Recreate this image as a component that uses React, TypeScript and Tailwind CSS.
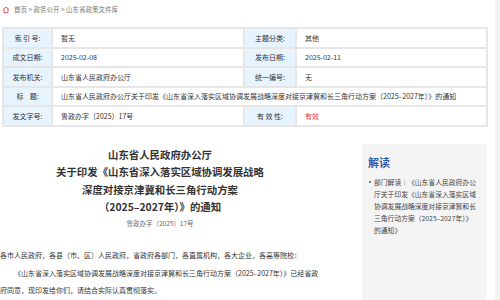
import React from 'react';

const font = { fontFamily: '"Noto Sans CJK SC", "Noto Sans", sans-serif' };

const Label = ({ children }: { children: React.ReactNode }) => (
  <div className="bg-[#e8f4fd] flex items-center justify-center text-[7px] text-[#333] whitespace-pre">{children}</div>
);

const Value = ({ children, red }: { children: React.ReactNode; red?: boolean }) => (
  <div className={`bg-white flex items-center pl-[8px] text-[7px] ${red ? 'text-[#e4393c]' : 'text-[#333]'}`}>{children}</div>
);

const readingLines = [
  '部门解读｜《山东省人民政府办公',
  '厅关于印发《山东省深入落实区域',
  '协调发展战略深度对接京津冀和长',
  '三角行动方案（2025–2027年）》',
  '的通知》',
];

const App = () => {
  return (
    <div className="w-[500px] h-[300px] overflow-hidden bg-white relative" style={font}>
      {/* right edge strip */}
      <div className="absolute right-0 top-0 w-[5px] h-full bg-[#f2f2f2]" />

      {/* breadcrumb */}
      <div className="flex items-center gap-[4px] pl-[2px] pt-[4px] h-[16px] text-[6.5px] text-[#777]">
        <svg width="8" height="8" viewBox="0 0 24 24" fill="none" stroke="#e4393c" strokeWidth="2.5" strokeLinejoin="round">
          <path d="M3 11 L12 3 L21 11" />
          <path d="M6 9 V20 H18 V9" />
        </svg>
        <span>首页 &gt; 政务公开 &gt; 山东省政策文件库</span>
      </div>

      {/* info table */}
      <div className="ml-[2px] mt-[11px] w-[486px] grid grid-cols-[47px_190px_50px_1fr] auto-rows-[17.5px] gap-[2px] p-[2px] bg-[#e6e6e6]">
        <Label>索 引 号:</Label>
        <Value>暂无</Value>
        <Label>主题分类:</Label>
        <Value>其他</Value>

        <Label>成文日期:</Label>
        <Value>2025-02-08</Value>
        <Label>发布日期:</Label>
        <Value>2025-02-11</Value>

        <Label>发布机关:</Label>
        <Value>山东省人民政府办公厅</Value>
        <Label>统一编号:</Label>
        <Value>无</Value>

        <Label>标    题:</Label>
        <div className="col-span-3 bg-white flex items-center pl-[8px] text-[7px] text-[#333]">
          山东省人民政府办公厅关于印发《山东省深入落实区域协调发展战略深度对接京津冀和长三角行动方案（2025–2027年）》的通知
        </div>

        <Label>发文字号:</Label>
        <Value>鲁政办字〔2025〕17号</Value>
        <Label>有 效 性:</Label>
        <Value red>有效</Value>
      </div>

      {/* content */}
      <div className="flex mt-[19px]">
        <div className="w-[320px] shrink-0">
          <div className="text-center font-bold text-[10.4px] leading-[17.5px] text-[#333]">
            <div>山东省人民政府办公厅</div>
            <div>关于印发《山东省深入落实区域协调发展战略</div>
            <div>深度对接京津冀和长三角行动方案</div>
            <div>（2025–2027年）》的通知</div>
          </div>
          <div className="text-center text-[6.5px] text-[#666] mt-[3px]">鲁政办字〔2025〕17号</div>
          <div className="mt-[19px] text-[7px] leading-[17.5px] text-[#333]">
            <p>各市人民政府，各县（市、区）人民政府，省政府各部门，各直属机构，各大企业，各高等院校：</p>
            <p className="indent-[14px]">
              《山东省深入落实区域协调发展战略深度对接京津冀和长三角行动方案（2025–2027年）》已经省政府同意，现印发给你们，请结合实际认真贯彻落实。
            </p>
          </div>
        </div>

        <div className="ml-[42px] w-[125px] h-[160px] bg-[#f4f4f4] pl-[6px] pt-[10px] -mt-[2px]">
          <div className="text-[11px] font-bold text-[#2c5ea9] leading-[16px]">解读</div>
          <ul className="mt-[6px] text-[6.8px] leading-[12px] text-[#444]">
            <li className="flex">
              <span className="w-[6px] shrink-0 flex pt-[5px] pl-[1px]">
                <span className="w-[2px] h-[2px] rounded-full bg-[#555]" />
              </span>
              <span className="whitespace-nowrap">
                {readingLines.map((line) => (
                  <span key={line} className="block">{line}</span>
                ))}
              </span>
            </li>
          </ul>
        </div>
      </div>
    </div>
  );
};

export default App;
